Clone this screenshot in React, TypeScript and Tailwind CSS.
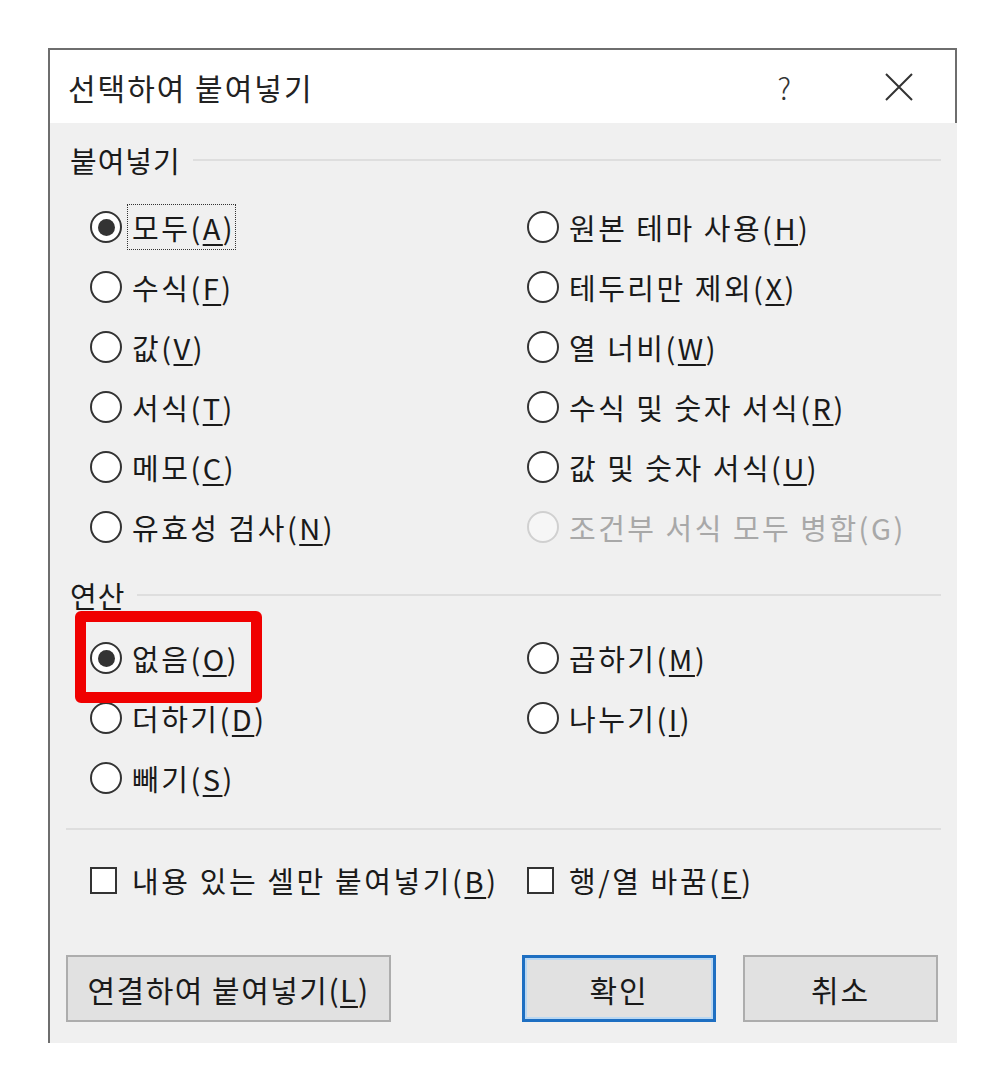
import type { ReactNode } from "react";
import clsx from "clsx";

function Radio({ checked, disabled }: { checked?: boolean; disabled?: boolean }) {
  return (
    <span
      className={clsx(
        "flex h-[32px] w-[32px] shrink-0 items-center justify-center rounded-full border-[2.5px]",
        disabled ? "border-[#d0d0d0] bg-[#f6f6f6]" : "border-[#333333] bg-white"
      )}
    >
      {checked && <span className="h-[17px] w-[17px] rounded-full bg-[#333333]" />}
    </span>
  );
}

function Label({ text, hotkey, plain }: { text: string; hotkey: string; plain?: boolean }) {
  return (
    <>
      {text}(
      {plain ? hotkey : <span className="underline decoration-[1.5px] underline-offset-[4px]">{hotkey}</span>})
    </>
  );
}

function Option({
  text,
  hotkey,
  checked,
  disabled,
  focused,
}: {
  text: string;
  hotkey: string;
  checked?: boolean;
  disabled?: boolean;
  focused?: boolean;
}) {
  return (
    <div className="flex h-[60px] items-center gap-[10px]">
      <Radio checked={checked} disabled={disabled} />
      <span
        className={clsx(
          "whitespace-nowrap tracking-[2.5px]",
          disabled ? "text-[#a8a8a8]" : "text-[#1a1a1a]",
          focused && "-ml-[5px] flex h-[46px] items-center border border-dotted border-[#333] pl-[4px]"
        )}
      >
        <Label text={text} hotkey={hotkey} plain={disabled} />
      </span>
    </div>
  );
}

function SectionTitle({ children }: { children: ReactNode }) {
  return (
    <div className="flex h-[40px] items-center pl-[20px] pr-[16px]">
      <span className="tracking-[1px] text-[#1a1a1a]">{children}</span>
      <span className="ml-[12px] h-[2px] flex-1 bg-[#dedede]" />
    </div>
  );
}

function Check({ text, hotkey }: { text: string; hotkey: string }) {
  return (
    <div className="flex h-[50px] items-center gap-[15px]">
      <span className="h-[27px] w-[27px] shrink-0 border-2 border-[#333333] bg-white" />
      <span className="whitespace-nowrap tracking-[2.6px] text-[#1a1a1a]">
        <Label text={text} hotkey={hotkey} />
      </span>
    </div>
  );
}

export default function App() {
  return (
    <div className="min-h-[1071px] bg-white pl-[48px] pt-[48px] font-['Noto_Sans_CJK_KR','Noto_Sans',sans-serif] text-[29px] leading-none">
      <div className="relative w-[909px] border-l-2 border-[#6e6e6e] bg-[#f0f0f0]">
        {/* title bar */}
        <div className="flex h-[75px] items-center border-r-2 border-t-2 border-[#6e6e6e] bg-white pl-[18px] pr-[42px]">
          <span className="text-[30px] tracking-[2px] text-[#222]">선택하여 붙여넣기</span>
          <span className="flex-1" />
          <span className="text-[30px] font-light text-[#333]">?</span>
          <svg width="28" height="28" viewBox="0 0 28 28" className="ml-[94px]">
            <path d="M1 1 L27 27 M27 1 L1 27" stroke="#333" strokeWidth="2" />
          </svg>
        </div>

        <div className="pb-[21px]">
          <div className="mt-[17px]">
            <SectionTitle>붙여넣기</SectionTitle>
          </div>
          <div className="mt-[17px] grid grid-cols-[437px_1fr] pl-[40px]">
            <Option text="모두" hotkey="A" checked focused />
            <Option text="원본 테마 사용" hotkey="H" />
            <Option text="수식" hotkey="F" />
            <Option text="테두리만 제외" hotkey="X" />
            <Option text="값" hotkey="V" />
            <Option text="열 너비" hotkey="W" />
            <Option text="서식" hotkey="T" />
            <Option text="수식 및 숫자 서식" hotkey="R" />
            <Option text="메모" hotkey="C" />
            <Option text="값 및 숫자 서식" hotkey="U" />
            <Option text="유효성 검사" hotkey="N" />
            <Option text="조건부 서식 모두 병합" hotkey="G" disabled />
          </div>

          <div className="mt-[18px]">
            <SectionTitle>연산</SectionTitle>
          </div>
          <div className="mt-[13px] grid grid-cols-[437px_1fr] pl-[40px]">
            <Option text="없음" hotkey="O" checked />
            <Option text="곱하기" hotkey="M" />
            <Option text="더하기" hotkey="D" />
            <Option text="나누기" hotkey="I" />
            <Option text="빼기" hotkey="S" />
          </div>

          <div className="ml-[16px] mr-[16px] mt-[20px] h-[2px] bg-[#dedede]" />

          <div className="mt-[25px] grid grid-cols-[437px_1fr] pl-[40px]">
            <Check text="내용 있는 셀만 붙여넣기" hotkey="B" />
            <Check text="행/열 바꿈" hotkey="E" />
          </div>

          <div className="mt-[50px] flex pl-[16px]">
            <button className="flex h-[67px] w-[325px] items-center justify-center border-2 border-[#adadad] bg-[#e1e1e1] text-[30px] tracking-[1.5px] text-[#1a1a1a]">
              <Label text="연결하여 붙여넣기" hotkey="L" />
            </button>
            <button className="ml-[131px] flex h-[67px] w-[194px] items-center justify-center border-[3px] border-[#1e6fc2] bg-[#e1e1e1] text-[30px] tracking-[2px] text-[#1a1a1a] shadow-[inset_0_0_0_2px_#b9d7f2]">
              확인
            </button>
            <button className="ml-[27px] flex h-[67px] w-[195px] items-center justify-center border-2 border-[#adadad] bg-[#e1e1e1] text-[30px] tracking-[2px] text-[#1a1a1a]">
              취소
            </button>
          </div>
        </div>

        {/* red highlight annotation */}
        <div className="absolute left-[25px] top-[563px] h-[92px] w-[187px] rounded-[6px] border-[11px] border-[#f00000]" />
      </div>
    </div>
  );
}
